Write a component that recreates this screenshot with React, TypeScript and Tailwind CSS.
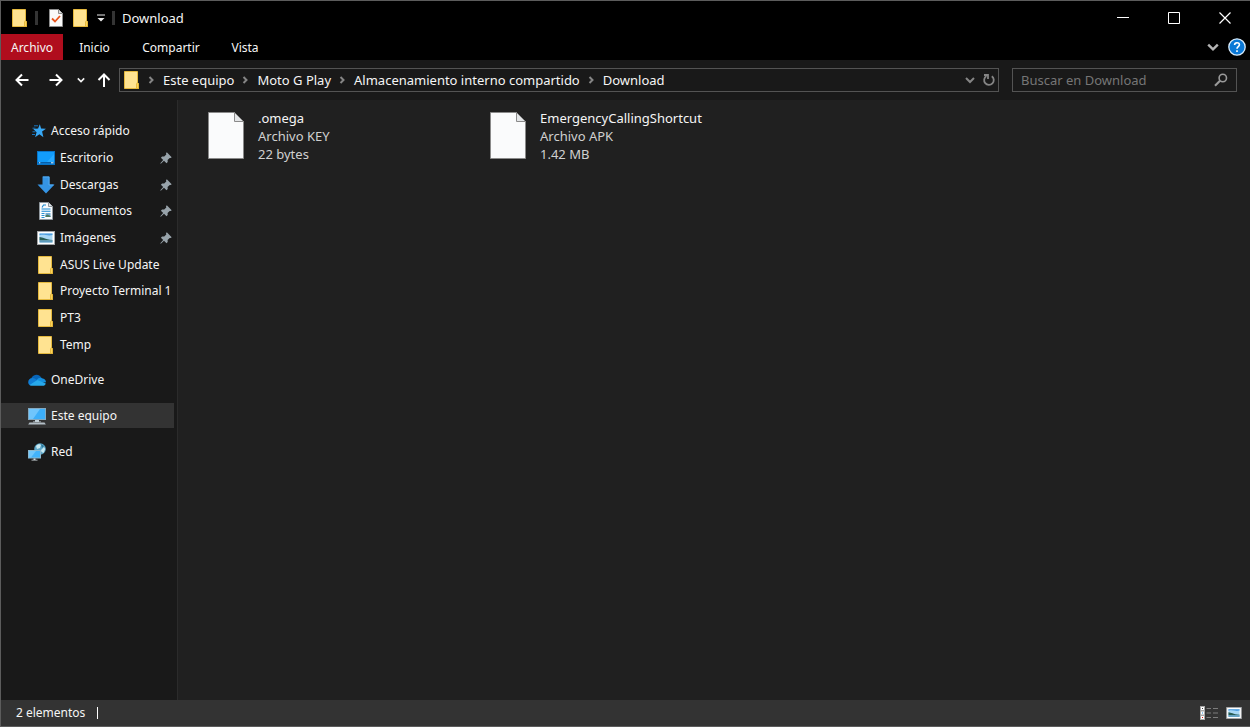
import type { ReactNode } from "react";

function FolderIcon({ className = "h-[18px] w-4" }: { className?: string }) {
  return (
    <svg viewBox="0 0 16 18" className={`shrink-0 ${className}`} aria-hidden="true">
      <path d="M0.5 0.5h13v11.3l1 1v4.7h-14z" fill="#ffe391" stroke="#e5b93e" />
      <path d="M12.5 17.5v-4.7l1-1.2 1 1.2v4.7z" fill="#fbd45c" stroke="#e0b030" strokeWidth="0.8" />
    </svg>
  );
}

function CheckPageIcon() {
  return (
    <svg viewBox="0 0 14 18" className="h-[18px] w-3.5" aria-hidden="true">
      <path d="M0.5 0.5h9l4 4v13h-13z" fill="#fafafa" stroke="#8d8d8d" />
      <path d="M9.5 0.5v4h4" fill="#ddd" stroke="#8d8d8d" />
      <path d="M3 9.5l3 3 5-5.5" fill="none" stroke="#e8541d" strokeWidth="1.8" />
    </svg>
  );
}

function StarIcon() {
  return (
    <svg viewBox="0 0 16 14" className="h-3.5 w-4" aria-hidden="true">
      <path d="M8.8 0.3l1.3 4.3 4.9 0.1-3.9 2.9 1.3 5.6-4-3-4.3 3 1.5-4.9-3.3-3.4 4.8-0.3z" fill="#37a8f5" />
      <path d="M3 1.8h4M1.5 4.2h3M1.5 7.8h3M1 10.5h3" stroke="#1780d0" strokeWidth="0.9" />
    </svg>
  );
}

function DesktopIcon() {
  return (
    <svg viewBox="0 0 18 14" className="h-3.5 w-[18px]" aria-hidden="true">
      <rect x="0.5" y="0.5" width="17" height="13" fill="#129cfa" stroke="#0874c8" />
      <path d="M10 11L17 3v8z" fill="#27aaff" />
      <path d="M1 11.8h16" stroke="#075ea8" strokeWidth="1.6" />
      <path d="M2 11.8h1.3M14 11.8h2.5" stroke="#e4f4ff" />
    </svg>
  );
}

function DownloadIcon() {
  return (
    <svg viewBox="0 0 18 18" className="h-[18px] w-[18px]" aria-hidden="true">
      <path d="M5.5 0.5h7v8h5L9 17.5 0.5 8.5h5z" fill="#3594e4" />
      <path d="M6 1h6v8h4.5" fill="none" stroke="#53aaf0" />
    </svg>
  );
}

function DocumentIcon() {
  return (
    <svg viewBox="0 0 14 18" className="h-[18px] w-3.5" aria-hidden="true">
      <path d="M0.5 0.5h9l4 4v13h-13z" fill="#f9fbfc" stroke="#8f979d" />
      <path d="M9.5 0.5v4h4" fill="#dce2e6" stroke="#8f979d" />
      <path d="M3 5.5l1.5-2.5h2.5M2.5 7h9M2.5 9.2h9" fill="none" stroke="#1687cf" strokeWidth="1.1" />
      <path d="M2.5 11.5h3M2.5 13.5h3M2.5 15.5h3" stroke="#2790d2" />
      <rect x="6.5" y="11" width="5" height="4" fill="#72abd4" />
      <path d="M6.5 15v-1.5l2-1 3 1.5v1z" fill="#4b7a62" />
    </svg>
  );
}

function PictureIcon({ className = "h-3.5 w-[18px]" }: { className?: string }) {
  return (
    <svg viewBox="0 0 18 14" className={className} aria-hidden="true">
      <rect x="0.5" y="0.5" width="17" height="13" fill="#fff" stroke="#a3a6a8" />
      <path d="M2.5 2.5h13v9h-13z" fill="#a9d8f5" />
      <path d="M2.5 2.5h13v1.6c-5 1.4-8-1.2-13 .2z" fill="#4f9fe2" />
      <path d="M2.5 6c3.5.2 5 2.2 13 3v.6h-13z" fill="#285d55" />
      <path d="M2.5 9.6h13v1.9h-13z" fill="#5c9bbd" />
    </svg>
  );
}

function CloudIcon() {
  return (
    <svg viewBox="0 0 18 12" className="h-3 w-[18px]" aria-hidden="true">
      <path d="M3.3 4.2C4.8.8 10.7-1.3 13.4 4L9 8z" fill="#0865b8" />
      <path d="M0.2 8.3C.2 5.5 2.3 3.7 5 4c2 .2 3.8 2.1 6 3.2L3 11.6C1.4 11.3.2 10 .2 8.3z" fill="#107dd5" />
      <path d="M8.8 5.9c1.3-2 3.6-2.6 5.2-1.7 2.3.2 4 2 4 4L13 9z" fill="#1490df" />
      <path d="M1.6 11L9.3 6l8.5 3.4c-.4 1.5-1.6 2.3-3 2.3H4c-1 0-1.8-.2-2.4-.7z" fill="#27a9ec" />
    </svg>
  );
}

function ComputerIcon() {
  return (
    <svg viewBox="0 0 18 18" className="h-[18px] w-[18px]" aria-hidden="true">
      <rect x="0.5" y="1.5" width="17" height="11" fill="#3caef9" stroke="#82a9c1" />
      <path d="M1 2h11L5 12H1z" fill="#6fc5fc" />
      <path d="M7 13h4v1.5h2v.8H5v-.8h2z" fill="#c3d0d8" />
      <path d="M1.5 15.5h15l1.3 2H.2z" fill="#b3bec6" />
    </svg>
  );
}

function NetworkIcon() {
  return (
    <svg viewBox="0 0 18 18" className="h-[18px] w-[18px]" aria-hidden="true">
      <circle cx="12" cy="6" r="5.8" fill="#5ba6c8" />
      <path d="M8 3c2-2 4-2 5-1l-1 3-3 1zM13 7l3-3 1.2 2-1.7 4-2-1z" fill="#c8e8f0" />
      <path d="M13 1l3 2-2 2zM10 8l2-1 1 4z" fill="#2d7899" />
      <rect x="0.5" y="7.5" width="12" height="7.5" fill="#42b3fb" stroke="#8bb8cf" />
      <path d="M1 8h7l-5 6.5H1z" fill="#70c7fc" />
      <path d="M5.5 15.5h2v1.2h2v.9h-6v-.9h2z" fill="#d1dbe0" />
    </svg>
  );
}

function PinIcon() {
  return (
    <svg viewBox="0 0 12 12" className="h-3 w-3" aria-hidden="true">
      <path d="M6.8.3l4.9 4.9-1 .9-1-.2-2.1 2.2.1 2-1.2 1.2L4 8.8.8 11.7l-.5-.5L3.2 8 .9 5.7l1.2-1.2 2.1.1 2.1-2-.3-1.3z" fill="#98a3aa" />
    </svg>
  );
}

function FileIcon() {
  return (
    <svg viewBox="0 0 36 48" className="h-12 w-9 shrink-0" aria-hidden="true">
      <path d="M0.5 0.5h26l9 9v37h-35z" fill="#fafbfc" stroke="#8a8a8a" />
      <path d="M26.5 0.5v9h9z" fill="#e4e6e8" stroke="#8a8a8a" />
    </svg>
  );
}

function Chevron({ dir, className }: { dir: "down" | "right"; className: string }) {
  return (
    <svg viewBox="0 0 10 10" className={`shrink-0 ${className}`} fill="none" stroke="currentColor" strokeWidth="2" aria-hidden="true">
      <path d={dir === "down" ? "M1 3l4 4 4-4" : "M3.5 2L6.5 5l-3 3"} />
    </svg>
  );
}

function Arrow({ d }: { d: string }) {
  return (
    <svg viewBox="0 0 14 14" className="h-3.5 w-3.5" fill="none" stroke="#fff" strokeWidth="2" aria-hidden="true">
      <path d={d} />
    </svg>
  );
}

const quickAccess: { name: string; icon: ReactNode; pinned?: boolean }[] = [
  { name: "Escritorio", icon: <DesktopIcon />, pinned: true },
  { name: "Descargas", icon: <DownloadIcon />, pinned: true },
  { name: "Documentos", icon: <DocumentIcon />, pinned: true },
  { name: "Imágenes", icon: <PictureIcon />, pinned: true },
  { name: "ASUS Live Update", icon: <FolderIcon /> },
  { name: "Proyecto Terminal 1", icon: <FolderIcon /> },
  { name: "PT3", icon: <FolderIcon /> },
  { name: "Temp", icon: <FolderIcon /> },
];

const places = [
  { name: "OneDrive", icon: <CloudIcon /> },
  { name: "Este equipo", icon: <ComputerIcon />, active: true },
  { name: "Red", icon: <NetworkIcon /> },
];

const crumbs = ["Este equipo", "Moto G Play", "Almacenamiento interno compartido", "Download"];

const files = [
  { name: ".omega", type: "Archivo KEY", size: "22 bytes" },
  { name: "EmergencyCallingShortcut", type: "Archivo APK", size: "1.42 MB" },
];

function TitleBar() {
  return (
    <header className="flex h-[33px] items-center bg-black pl-[11px]">
      <FolderIcon />
      <span className="ml-[7px] h-3.5 w-[3px] bg-[#343434]" />
      <button aria-label="Propiedades" className="ml-[11px]"><CheckPageIcon /></button>
      <button aria-label="Nueva carpeta" className="ml-2.5"><FolderIcon /></button>
      <button aria-label="Personalizar barra" className="ml-2">
        <svg viewBox="0 0 8 8" className="h-2 w-2" fill="#e8e8e8" aria-hidden="true">
          <path d="M0 0.5h8v1H0zM0.5 4h7L4 7.5z" />
        </svg>
      </button>
      <span className="ml-[7px] h-3.5 w-[3px] bg-[#343434]" />
      <h1 className="ml-[7px] text-[13px]">Download</h1>
      <div className="ml-auto flex h-full">
        <button aria-label="Minimizar" className="grid w-[51px] place-items-center">
          <svg viewBox="0 0 12 12" className="h-3 w-3" stroke="#fff" aria-hidden="true"><path d="M0 5.5h12" /></svg>
        </button>
        <button aria-label="Maximizar" className="grid w-[51px] place-items-center">
          <svg viewBox="0 0 12 12" className="h-3 w-3" fill="none" stroke="#fff" aria-hidden="true"><path d="M.5.5h11v11H.5z" /></svg>
        </button>
        <button aria-label="Cerrar" className="grid w-[51px] place-items-center">
          <svg viewBox="0 0 12 12" className="h-3 w-3" stroke="#fff" strokeWidth="1.2" aria-hidden="true"><path d="M.5.5l11 11M11.5.5l-11 11" /></svg>
        </button>
      </div>
    </header>
  );
}

function MenuBar() {
  return (
    <nav className="flex h-[26px] items-stretch bg-black">
      <button className="w-[62px] bg-[#b00d1d] pt-0.5">Archivo</button>
      <button className="w-[63px] pt-0.5">Inicio</button>
      <button className="w-[90px] pt-0.5">Compartir</button>
      <button className="w-[58px] pt-0.5">Vista</button>
      <button aria-label="Expandir cinta" className="ml-auto text-[#b4b4b4]"><Chevron dir="down" className="h-3 w-3" /></button>
      <button aria-label="Ayuda" className="mr-1 ml-[9px]">
        <svg viewBox="0 0 18 18" className="h-[18px] w-[18px]" aria-hidden="true">
          <circle cx="9" cy="9" r="8.2" fill="#0a78d6" stroke="#d9ecfb" strokeWidth="1.3" />
          <path d="M6.6 7c0-3 4.8-3 4.8-.2 0 1.8-2.4 1.8-2.4 3.9M9 12.2v1.7" fill="none" stroke="#fff" strokeWidth="1.6" />
        </svg>
      </button>
    </nav>
  );
}

function AddressBar() {
  return (
    <div className="flex h-10 items-center pr-[13px] pl-3.5">
      <button aria-label="Atrás"><Arrow d="M13.5 7H1.5M7 1.5L1.5 7 7 12.5" /></button>
      <button aria-label="Adelante" className="ml-5"><Arrow d="M0.5 7h12M7 1.5L12.5 7 7 12.5" /></button>
      <button aria-label="Recientes" className="ml-3.5"><Chevron dir="down" className="h-2 w-2" /></button>
      <button aria-label="Subir" className="ml-3"><Arrow d="M7 14V1.5M1.5 7L7 1.5 12.5 7" /></button>
      <div className="ml-2 flex h-6 min-w-0 flex-1 items-center border border-[#535353] pr-0.5 pl-1">
        <FolderIcon />
        {crumbs.map((crumb) => (
          <div key={crumb} className="flex items-center text-[13px] whitespace-nowrap">
            <Chevron dir="right" className="mr-[7px] ml-1.5 h-2.5 w-2.5 text-[#858585]" />
            <button>{crumb}</button>
          </div>
        ))}
        <button aria-label="Historial" className="ml-auto text-[#858585]"><Chevron dir="down" className="h-2.5 w-2.5" /></button>
        <button aria-label="Actualizar" className="ml-[7px]">
          <svg viewBox="0 0 14 14" className="h-3.5 w-3.5" fill="none" stroke="#858585" strokeWidth="1.8" aria-hidden="true">
            <path d="M9.8 3.2a4.8 4.8 0 1 1-5.4-.2M2 2h4v4" />
          </svg>
        </button>
      </div>
      <label className="ml-[13px] flex h-6 w-[225px] items-center border border-[#535353] px-2">
        <input aria-label="Buscar" placeholder="Buscar en Download" className="min-w-0 flex-1 bg-transparent text-[13px] outline-none placeholder:text-[#767676]" />
        <svg viewBox="0 0 14 14" className="h-3.5 w-3.5" fill="none" stroke="#9a9a9a" aria-hidden="true">
          <circle cx="8.8" cy="5" r="3.7" strokeWidth="1.6" />
          <path d="M6 7.8L1 12.8" strokeWidth="2.2" />
        </svg>
      </label>
    </div>
  );
}

function Sidebar() {
  return (
    <aside className="w-[177px] shrink-0 border-r border-[#2b2b2b] pt-[18px] pr-[3px]">
      <ul className="grid h-60 auto-rows-fr">
        <li className="flex items-center gap-1 pl-[30px]">
          <StarIcon />
          <a href="#acceso">Acceso rápido</a>
        </li>
        {quickAccess.map((item) => (
          <li key={item.name} className="flex items-center pl-9">
            <span className="grid w-[18px] shrink-0 place-items-center">{item.icon}</span>
            <a href="#carpeta" className="ml-[5px] flex-1 whitespace-nowrap">{item.name}</a>
            {item.pinned && <span className="mr-0.5"><PinIcon /></span>}
          </li>
        ))}
      </ul>
      <ul className="mt-[9px] grid gap-[11px]">
        {places.map((place) => (
          <li key={place.name} className={`flex h-[25px] items-center gap-[5px] pl-[27px] ${place.active ? "bg-[#333333]" : ""}`}>
            {place.icon}
            <a href="#lugar">{place.name}</a>
          </li>
        ))}
      </ul>
    </aside>
  );
}

export default function App() {
  return (
    <div className="flex min-h-screen flex-col border-t border-l border-[#5c5c5c] bg-[#191919] font-['Noto_Sans','Open_Sans',sans-serif] text-[12px] leading-[18px] text-[#f5f5f5]">
      <TitleBar />
      <MenuBar />
      <AddressBar />
      <div className="flex flex-1">
        <Sidebar />
        <main className="flex flex-1 flex-wrap content-start bg-[#202020] pt-[9px] pl-[30px]">
          {files.map((file) => (
            <article key={file.name} className="flex w-[282px] gap-3.5 text-[13px]">
              <div className="pt-[3px]"><FileIcon /></div>
              <div className="text-[#d0d0d0]">
                <h2 className="text-[#f5f5f5]">{file.name}</h2>
                <p>{file.type}</p>
                <p>{file.size}</p>
              </div>
            </article>
          ))}
        </main>
      </div>
      <footer className="flex h-[27px] items-center border-b border-[#5c5c5c] bg-[#333333] pr-2 pl-[15px]">
        <span>2 elementos</span>
        <span className="ml-3 h-3 w-px bg-white" />
        <button aria-label="Detalles" className="ml-auto">
          <svg viewBox="0 0 18 14" className="h-3.5 w-[18px]" aria-hidden="true">
            <path d="M0 0h5v14H0z" fill="#a8a8a8" />
            <path d="M1 1h3v3H1zM1 5.5h3v3H1zM1 10h3v3H1z" fill="#fff" />
            <path d="M2 2h1v1H2z" fill="#444" />
            <path d="M2 6.5h1v1H2z" fill="#2389da" />
            <path d="M2 11h1v1H2z" fill="#e01919" />
            <path d="M6.5 2.5h4.5M13 2.5h5M6.5 7h4.5M13 7h5M6.5 11.5h4.5M13 11.5h5" stroke="#7d7d7d" />
          </svg>
        </button>
        <button aria-label="Iconos grandes" className="ml-2"><PictureIcon className="h-3 w-4" /></button>
      </footer>
    </div>
  );
}
